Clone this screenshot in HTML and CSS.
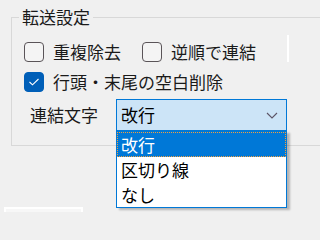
FILE: index.html
```html
<!DOCTYPE html>
<html lang="ja">
<head>
<meta charset="utf-8">
<title>転送設定</title>
<link rel="stylesheet" href="styles.css">
</head>
<body>
<div class="page">
  <div class="group">
    <div class="group-title">転送設定</div>
    <div class="row row-1">
      <label class="check"><span class="box"></span><span class="check-text">重複除去</span></label>
      <label class="check check-second"><span class="box"></span><span class="check-text">逆順で連結</span></label>
      <span class="edge"></span>
    </div>
    <div class="row row-2">
      <label class="check"><span class="box box-on"><svg width="20" height="20" viewBox="0 0 20 20"><path d="M5.5 10 L8.5 12.8 L14.5 7" fill="none" stroke="#ffffff" stroke-width="1.1"/></svg></span><span class="check-text">行頭・末尾の空白削除</span></label>
    </div>
    <div class="row row-3">
      <span class="field-label">連結文字</span>
      <div class="combo">
        <span class="combo-value">改行</span>
        <svg class="chevron" width="12" height="7" viewBox="0 0 12 7"><path d="M1 1 L6 6 L11 1" fill="none" stroke="#5c5466" stroke-width="1.1"/></svg>
        <ul class="dropdown">
          <li class="option option-selected">改行</li>
          <li class="option">区切り線</li>
          <li class="option">なし</li>
        </ul>
      </div>
    </div>
  </div>
  <div class="stub"></div>
</div>
</body>
</html>
```
FILE: styles.css
```css
html, body {
  margin: 0;
  padding: 0;
  overflow: hidden;
}
body {
  background: #f0f0f0;
  font-family: "Noto Sans CJK JP", "Noto Sans", sans-serif;
  font-size: 17px;
  color: #1a1a1a;
}
.page {
  padding-top: 17px;
  height: 212px;
  box-sizing: border-box;
  overflow: hidden;
}
.group {
  margin: 0 0 0 11px;
  border: 1px solid #d8d8d8;
  border-right: none;
  padding: 0 0 14px 12px;
}
.group-title {
  width: fit-content;
  margin: -11px 0 0 -5px;
  padding: 0 3px;
  line-height: 20px;
  background: #f0f0f0;
}
.row {
  display: flex;
  align-items: center;
  white-space: nowrap;
}
.row-1 {
  margin-top: 13px;
  height: 24px;
}
.row-2 {
  margin-top: 6px;
  height: 24px;
}
.row-3 {
  margin-top: 5px;
}
.check {
  display: flex;
  align-items: center;
  flex-shrink: 0;
  gap: 9px;
  line-height: 24px;
}
.check-second {
  margin-left: 21px;
}
.box {
  width: 20px;
  height: 20px;
  box-sizing: border-box;
  border: 1px solid #5a5458;
  border-radius: 4px;
  background: #f4f4f4;
  display: block;
  flex-shrink: 0;
}
.box-on {
  background: #005fb8;
  border-color: #005fb8;
}
.box-on svg {
  display: block;
  margin: -1px;
}
.edge {
  align-self: flex-end;
  flex-shrink: 0;
  width: 2px;
  height: 27px;
  margin: 0 0 2px 31px;
  background: #ffffff;
}
.field-label {
  margin-left: 6px;
  width: 86px;
  line-height: 24px;
}
.combo {
  position: relative;
  width: 171px;
  height: 32px;
  box-sizing: border-box;
  border: 1px solid #0078d7;
  background: #cce4f7;
  display: flex;
  align-items: center;
  padding-left: 4px;
}
.combo-value {
  flex: 1;
  line-height: 24px;
  color: #000000;
}
.chevron {
  margin-right: 8px;
  display: block;
}
.dropdown {
  position: absolute;
  left: -1px;
  top: 31px;
  width: 171px;
  box-sizing: border-box;
  margin: 0;
  padding: 0;
  list-style: none;
  background: #ffffff;
  border: 1px solid #0078d7;
  box-shadow: 3px 2px 2px rgba(0, 0, 0, 0.25);
}
.option {
  height: 25px;
  line-height: 25px;
  padding-left: 4px;
  color: #000000;
  box-sizing: border-box;
}
.option-selected {
  background: #0078d7;
  color: #ffffff;
  border: 1px dotted #f0a040;
  line-height: 23px;
  padding-left: 3px;
}
.stub {
  margin: 61px 0 0 4px;
  width: 79px;
  height: 12px;
  box-sizing: border-box;
  border: 2px solid #ffffff;
  background: #f7f7f7;
}
```
